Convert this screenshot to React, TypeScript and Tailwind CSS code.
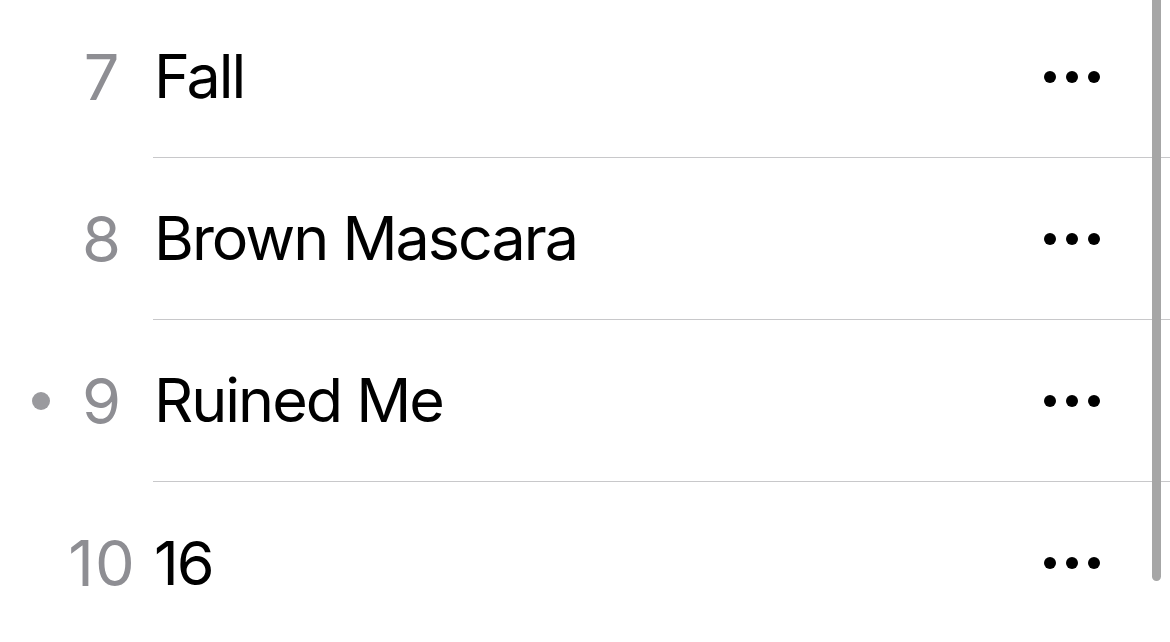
const tracks = [
  { n: 7, title: 'Fall', playing: false },
  { n: 8, title: 'Brown Mascara', playing: false },
  { n: 9, title: 'Ruined Me', playing: true },
  { n: 10, title: '16', playing: false },
];

function MoreDots() {
  return (
    <div className="flex items-center gap-[10px]">
      <span className="w-[12px] h-[12px] rounded-full bg-black" />
      <span className="w-[12px] h-[12px] rounded-full bg-black" />
      <span className="w-[12px] h-[12px] rounded-full bg-black" />
    </div>
  );
}

export default function App() {
  return (
    <div
      className="relative w-[1170px] h-[642px] overflow-hidden bg-white text-black"
      style={{ fontFamily: 'Inter, "Noto Sans", sans-serif' }}
    >
      <div className="-mt-[4px]">
        {tracks.map((t, i) => (
          <div key={t.n} className="flex h-[162px]">
            <div className="flex items-center w-[153px] shrink-0">
              <div className="w-[82px] flex justify-center">
                {t.playing && <span className="w-[18px] h-[18px] rounded-full bg-[#9a9a9e]" />}
              </div>
              <div className="w-[40px] flex justify-center text-[63px] leading-none text-[#8e8e93] tracking-[1px] whitespace-nowrap">
                {t.n}
              </div>
            </div>
            <div
              className={`flex-1 flex items-center justify-between pr-[70px] ${
                i < tracks.length - 1 ? 'border-b border-[#c8c8ca]' : ''
              }`}
            >
              <span className="pl-[1px] text-[61px] leading-none tracking-[-2px] whitespace-nowrap">{t.title}</span>
              <MoreDots />
            </div>
          </div>
        ))}
      </div>
      {/* scroll indicator */}
      <div className="absolute left-[1152px] -top-[10px] w-[9px] h-[591px] rounded-full bg-[#a6a6a6]" />
    </div>
  );
}
